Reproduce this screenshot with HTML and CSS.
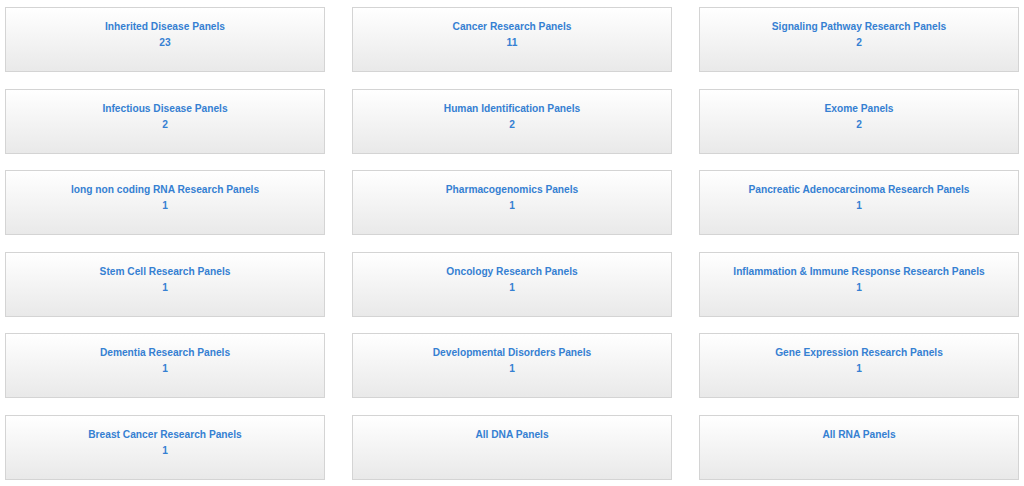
FILE: index.html
```html
<!DOCTYPE html>
<html>
<head>
<meta charset="utf-8">
<link rel="stylesheet" href="styles.css">
</head>
<body>
<div class="grid">
  <a class="panel" href="#"><span class="title">Inherited Disease Panels</span><span class="count">23</span></a>
  <a class="panel" href="#"><span class="title">Cancer Research Panels</span><span class="count">11</span></a>
  <a class="panel" href="#"><span class="title">Signaling Pathway Research Panels</span><span class="count">2</span></a>
  <a class="panel" href="#"><span class="title">Infectious Disease Panels</span><span class="count">2</span></a>
  <a class="panel" href="#"><span class="title">Human Identification Panels</span><span class="count">2</span></a>
  <a class="panel" href="#"><span class="title">Exome Panels</span><span class="count">2</span></a>
  <a class="panel" href="#"><span class="title">long non coding RNA Research Panels</span><span class="count">1</span></a>
  <a class="panel" href="#"><span class="title">Pharmacogenomics Panels</span><span class="count">1</span></a>
  <a class="panel" href="#"><span class="title">Pancreatic Adenocarcinoma Research Panels</span><span class="count">1</span></a>
  <a class="panel" href="#"><span class="title">Stem Cell Research Panels</span><span class="count">1</span></a>
  <a class="panel" href="#"><span class="title">Oncology Research Panels</span><span class="count">1</span></a>
  <a class="panel" href="#"><span class="title">Inflammation &amp; Immune Response Research Panels</span><span class="count">1</span></a>
  <a class="panel" href="#"><span class="title">Dementia Research Panels</span><span class="count">1</span></a>
  <a class="panel" href="#"><span class="title">Developmental Disorders Panels</span><span class="count">1</span></a>
  <a class="panel" href="#"><span class="title">Gene Expression Research Panels</span><span class="count">1</span></a>
  <a class="panel" href="#"><span class="title">Breast Cancer Research Panels</span><span class="count">1</span></a>
  <a class="panel" href="#"><span class="title">All DNA Panels</span></a>
  <a class="panel" href="#"><span class="title">All RNA Panels</span></a>
</div>
</body>
</html>
```
FILE: styles.css
```css
html, body {
  margin: 0;
  padding: 0;
  background: #ffffff;
}
.grid {
  display: grid;
  grid-template-columns: 320px 320px 320px;
  column-gap: 27px;
  row-gap: 16.5px;
  padding: 7px 0 0 5px;
}
.panel {
  box-sizing: border-box;
  height: 65px;
  display: flex;
  flex-direction: column;
  align-items: center;
  padding-top: 11px;
  border: 1px solid #d4d4d4;
  background: linear-gradient(to bottom, #ffffff 0%, #e9e9e9 100%);
  text-decoration: none;
  font-family: "Liberation Sans", Arial, sans-serif;
  font-weight: bold;
  font-size: 10.2px;
  line-height: 16px;
  color: #3580d2;
}
```
